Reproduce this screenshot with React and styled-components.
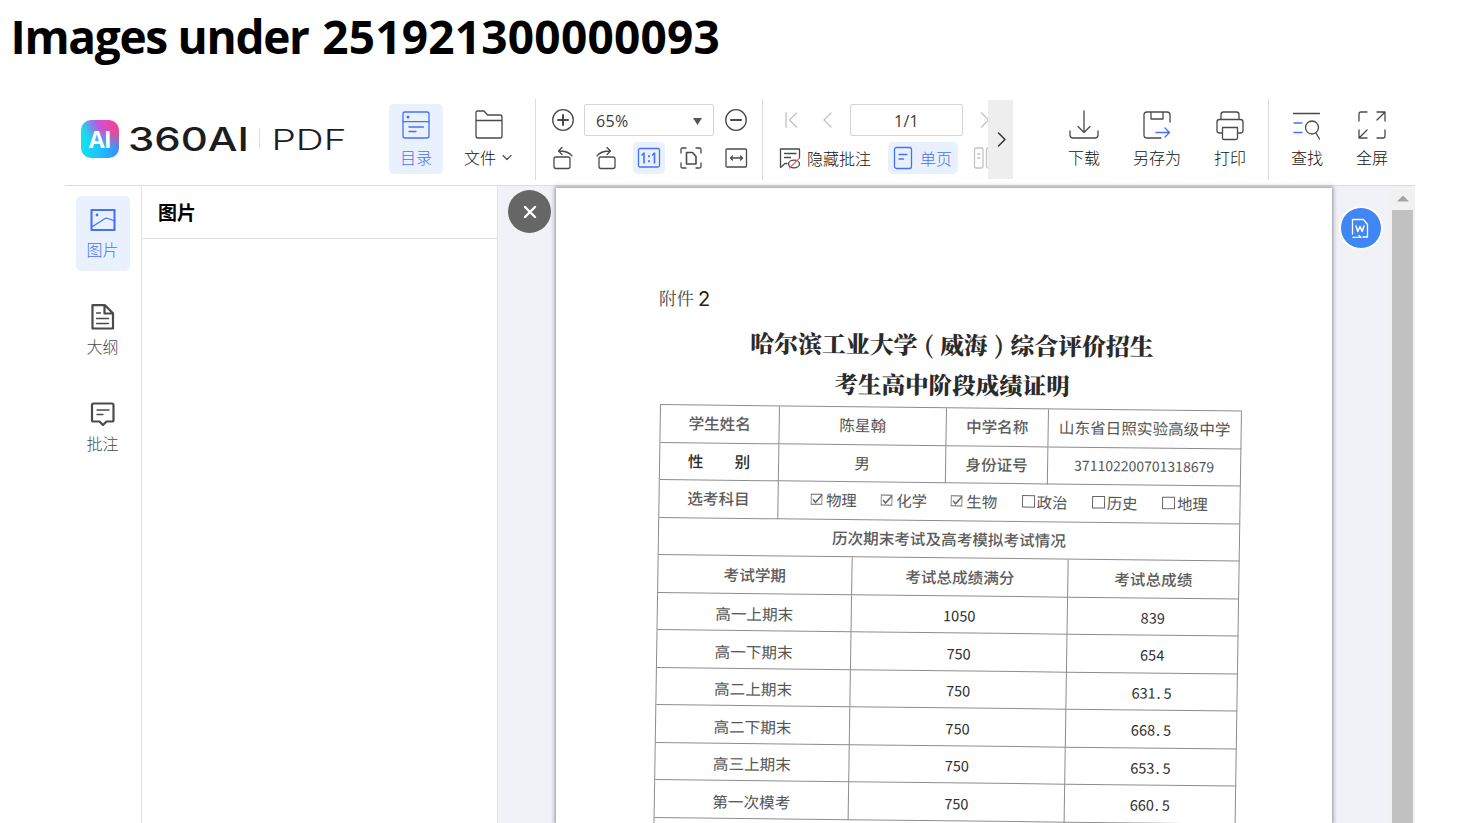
import React from 'react';
import styled, { createGlobalStyle, css } from 'styled-components';

const BLUE = '#4571f6';
const INK = '#4a4a4a';

const GlobalStyle = createGlobalStyle`
  * { box-sizing: border-box; }
  html, body { margin: 0; background: #fff; overflow: hidden; }
  body { font-family: "Open Sans", "Noto Sans CJK SC", sans-serif; color: #222; }
  svg { display: block; flex: none; }
`;

const Shell = styled.div`
  width: 1472px;
  height: 823px;
  overflow: hidden;
  display: flex;
  flex-direction: column;
`;

const Heading = styled.h1`
  margin: 0;
  height: 98px;
  padding: 6px 0 0 10.5px;
  font: 700 46px/60px "Open Sans", sans-serif;
  letter-spacing: 0.2px;
  color: #000;
  white-space: nowrap;
`;

const HeadingWords = styled.span`
  margin-right: 3px;
  letter-spacing: -1.3px;
`;

const Viewer = styled.div`
  width: 1350px;
  margin-left: 65px;
  flex: 1;
  min-height: 0;
  display: flex;
  flex-direction: column;
`;

const Toolbar = styled.header`
  height: 88px;
  flex: none;
  display: flex;
  align-items: flex-start;
  border-bottom: 1px solid #dedee1;
`;

const Brand = styled.div`
  width: 324px;
  height: 82px;
  padding-left: 16px;
  display: flex;
  align-items: center;
`;

const BrandBadge = styled.div`
  width: 38px;
  height: 38px;
  border-radius: 10px;
  display: flex;
  align-items: center;
  justify-content: center;
  font: 700 23px/38px "Open Sans", sans-serif;
  letter-spacing: -0.5px;
  color: #fff;
  background:
    radial-gradient(circle at 100% 22%, #ff3f83 0, rgba(255, 63, 131, 0) 45%),
    radial-gradient(circle at 65% 0, #e348da 0, rgba(200, 80, 225, 0.9) 22%, rgba(150, 90, 235, 0) 55%),
    linear-gradient(100deg, #14dff0 15%, #1fc0fa 55%, #3b8bff 100%);
`;

const Wordmark = styled.svg`
  margin-left: 9px;
  font-family: Inter, sans-serif;
`;

const Divider = styled.i`
  width: 1px;
  height: 81px;
  margin: 1px ${p => p.$right || 0}px 0 ${p => p.$left || 0}px;
  background: #dadadd;
`;

const Tool = styled.button`
  width: ${p => p.$width || 60}px;
  height: 70px;
  margin: 6px 0 0 ${p => p.$left || 0}px;
  padding: 5px 0 0;
  border: 0;
  border-radius: 5px;
  background: ${p => (p.$active ? '#eaf1fe' : 'transparent')};
  color: ${p => (p.$active ? BLUE : INK)};
  display: flex;
  flex-direction: column;
  align-items: center;
`;

const ToolLabel = styled.span`
  margin-top: 4px;
  display: flex;
  align-items: center;
  gap: 6px;
  font: 300 16px/24px "Noto Sans CJK SC", sans-serif;
  color: ${p => (p.$active ? BLUE : '#111')};
  white-space: nowrap;
`;

const ZoomGroup = styled.div`
  width: 205px;
  margin: 6px 0 0 11px;
`;

const ZoomRow = styled.div`
  height: 32px;
  margin-bottom: 6px;
  display: grid;
  grid-template-columns: 37px 136px 32px;
  align-items: center;
`;

const FitRow = styled.div`
  display: grid;
  grid-template-columns: 43px 42.5px 42.5px 44.5px 32px;
`;

const IconCell = styled.span`
  width: 32px;
  height: 32px;
  display: flex;
  align-items: center;
  justify-content: center;
  border-radius: 5px;
  color: ${p => (p.$active ? BLUE : INK)};
  background: ${p => (p.$active ? '#eaf1fe' : 'transparent')};
`;

const Field = styled.div`
  width: ${p => p.$width}px;
  height: 32px;
  padding: 2px 11px 0;
  border: 1px solid #d5d5d7;
  border-radius: 2px;
  display: flex;
  align-items: center;
  justify-content: ${p => (p.$center ? 'center' : 'space-between')};
  font: 400 16px/28px "Open Sans", sans-serif;
  letter-spacing: 0.3px;
  color: #3a3a3a;
`;

const PageGroup = styled.div`
  width: 225px;
  height: 76px;
  padding-top: 6px;
  overflow: hidden;
`;

const PageRow = styled.div`
  width: 260px;
  height: 32px;
  margin-bottom: 6px;
  display: flex;
  align-items: center;
`;

const Pager = styled.span`
  width: 22px;
  margin-left: ${p => p.$left}px;
  display: flex;
  justify-content: center;
  color: #c4c4c4;
`;

const TextTool = styled.span`
  height: 32px;
  margin-left: ${p => p.$left}px;
  padding: 0 ${p => (p.$active ? 6 : 0)}px 0 ${p => (p.$active ? 5 : 0)}px;
  border-radius: 5px;
  display: flex;
  align-items: center;
  gap: ${p => (p.$active ? 7 : 6)}px;
  font: 300 16px/31px "Noto Sans CJK SC", sans-serif;
  color: ${p => (p.$active ? BLUE : '#111')};
  background: ${p => (p.$active ? '#eaf1fe' : 'transparent')};
`;

const Expander = styled.div`
  width: 25px;
  height: 79px;
  margin-top: 2px;
  display: flex;
  align-items: center;
  justify-content: center;
  color: #333;
  background: #eeeeee;
`;

const Workspace = styled.div`
  flex: 1;
  min-height: 0;
  display: flex;
`;

const Sidebar = styled.nav`
  width: 77px;
  padding: 10px 0 0 11px;
  border-right: 1px solid #e2e2e4;
  display: flex;
  flex-direction: column;
  gap: 22px;
`;

const SideItem = styled.div`
  width: 54px;
  height: 75px;
  padding: 11px 1px 0 0;
  border-radius: 5px;
  display: flex;
  flex-direction: column;
  align-items: center;
  gap: 5px;
  font: 300 16px/22px "Noto Sans CJK SC", sans-serif;
  color: ${p => (p.$active ? BLUE : INK)};
  background: ${p => (p.$active ? '#eaf1fe' : 'transparent')};
`;

const Panel = styled.section`
  width: 356px;
  border-right: 1px solid #e2e2e4;
`;

const PanelTitle = styled.h2`
  margin: 0;
  height: 53px;
  padding-left: 16px;
  border-bottom: 1px solid #e2e2e4;
  font: 700 19px/52px "Noto Sans CJK SC", sans-serif;
  color: #000;
`;

const Canvas = styled.main`
  position: relative;
  flex: 1;
  padding: 2px 0 0 58px;
  display: flex;
  justify-content: space-between;
  background: #f0f2f7;
`;

const CloseButton = styled.button`
  position: absolute;
  left: 10px;
  top: 4px;
  width: 43px;
  height: 43px;
  padding: 0;
  border: 0;
  border-radius: 50%;
  background: #666;
  display: flex;
  align-items: center;
  justify-content: center;
`;

const WordButton = styled.button`
  position: absolute;
  left: 842px;
  top: 21px;
  width: 42px;
  height: 42px;
  padding: 0 2px 0 0;
  border: 1px solid #fff;
  border-radius: 50%;
  box-shadow: 0 0 1px 1px #fff;
  background: #4086f4;
  display: flex;
  align-items: center;
  justify-content: center;
`;

const Scrollbar = styled.div`
  width: 25px;
  margin-top: -2px;
  padding: 9px 2px 0;
  background: #f1f1f1;
  display: flex;
  flex-direction: column;
  align-items: center;
  gap: 8px;
`;

const Thumb = styled.div`
  width: 21px;
  flex: 1;
  background: #c1c1c1;
`;

const Paper = styled.article`
  width: 776px;
  padding-top: 98px;
  overflow: hidden;
  background: #fff;
  box-shadow: 0 0 4px 1px rgba(70, 70, 85, 0.6);
  font-family: "Noto Sans CJK SC", sans-serif;
`;

const Attachment = styled.div`
  margin-left: 103px;
  height: 24px;
  display: flex;
  gap: 4px;
  font-family: "Noto Serif CJK SC", "Noto Sans CJK SC", serif;
  font-size: 17.5px;
  font-weight: 400;
  line-height: 24px;
  color: #4a4a4a;
`;

const AttachmentNo = styled.span`
  font: 400 20px/26px Inter, sans-serif;
  color: #222;
`;

const TitleLine = styled.div`
  margin: ${p => p.$top}px 0 0 16px;
  height: ${p => p.$height}px;
  text-align: center;
  font-family: "Noto Serif CJK SC", "Noto Sans CJK SC", serif;
  font-size: ${p => p.$size}px;
  font-weight: 900;
  line-height: ${p => p.$height - 3}px;
  color: #2b2b2b;
  transform: rotate(0.5deg);
`;

const Bracket = styled.span`
  display: inline-block;
  width: 22.5px;
  text-align: center;
  font-weight: 700;
`;

const ScoreTable = styled.div`
  width: 582px;
  margin: 0 0 0 104px;
  border: solid #8c8c8c;
  border-width: 1px 0 0 1px;
  transform: matrix(1, 0.0113, -0.0155, 1, 0, 0);
  transform-origin: 0 0;
`;

const Row = styled.div`
  height: 37.5px;
  display: flex;
`;

const Cell = styled.div`
  width: ${p => p.$w}px;
  padding: ${p => p.$drop || 0}px 0 ${p => p.$lift || 0}px 0;
  border: solid #8c8c8c;
  border-width: 0 1px 1px 0;
  display: flex;
  align-items: center;
  justify-content: center;
  font-size: 15.6px;
  font-weight: 400;
  line-height: 22px;
  white-space: pre;
  color: #555;
  ${p => p.$label && css`
    font-weight: 500;
    color: #5c5c5c;
  `}
  ${p => p.$strong && css`
    font-weight: 500;
    color: #2c2c2c;
  `}
`;

const Digits = styled.span`
  font-size: ${p => p.$size || 14.5}px;
  color: ${p => p.$color || '#2e2e2e'};
  padding-top: 2px;
`;

const Point = styled.span`
  display: inline-block;
  width: 8px;
  padding-left: 1px;
`;

const Subjects = styled.div`
  width: 462px;
  padding: 0 0 3px 32px;
  border: solid #8c8c8c;
  border-width: 0 1px 1px 0;
  display: grid;
  grid-template-columns: repeat(6, 70.2px);
  align-items: center;
`;

const Subject = styled.span`
  display: flex;
  align-items: center;
  gap: ${p => (p.$on ? 3.5 : 1.5)}px;
  font-size: 15.4px;
  line-height: 22px;
  color: #555;
`;

const Line = ({ size = 30, w = 1.3, children, ...rest }) => (
  <svg width={size} height={size} viewBox={`0 0 ${size} ${size}`} fill="none" stroke="currentColor"
    strokeWidth={w} strokeLinecap="round" strokeLinejoin="round" {...rest}>{children}</svg>
);

const CatalogIcon = () => (
  <Line size={32}><rect x="3" y="3" width="26" height="26" rx="2" /><path d="M3 12.7h26M9 18h14.500M9 22.500h7" />
    <circle cx="8" cy="8" r="1.500" fill="currentColor" stroke="none" /></Line>
);
const FolderIcon = () => (
  <Line size={32}><path d="M4 11.500V3.500Q4 2 5.500 2H12l3.500 4H28q2 0 2 2v19q0 2-2 2H6q-2 0-2-2V11.500h26" /></Line>
);
const DownloadIcon = () => (
  <Line size={32}><path d="M16 2v21M10 17.500l6 6 6-6M2 22v4q0 3 3 3h22q3 0 3-3v-4" /></Line>
);
const SaveAsIcon = () => (
  <Line size={32}><path d="M20 29H6q-3 0-3-3V6q0-3 3-3h20q3 0 3 3v7M10 3v7h12V3" />
    <path d="M15 23.500h13.500M24 19l4.500 4.500L24 28" stroke={BLUE} /></Line>
);
const PrintIcon = () => (
  <Line size={32}><path d="M7 10.500V5.500Q7 3 9.500 3h13Q25 3 25 5.500v5M8 24H5.500Q3 24 3 21.500v-8.500q0-2.500 2.500-2.500h21q2.500 0 2.500 2.500v8.500q0 2.500-2.500 2.500H24" />
    <path d="M8.500 18.500h15V29q0 1.500-1.500 1.500H10q-1.500 0-1.500-1.500z" /></Line>
);
const FindIcon = () => (
  <Line size={32}><path d="M2.500 4.500h26" /><circle cx="21" cy="18.500" r="6.500" /><path d="M25 24l3.500 6" />
    <path d="M3 14h8M3 23.500h8" stroke={BLUE} /></Line>
);
const FullIcon = () => (
  <Line size={32}><path d="M3 12V5q0-2 2-2h6M21 3h8v9M29 3l-8 8M29 21v6q0 2-2 2h-6M3 21v8h8M3 29l8-8" /></Line>
);
const Chevron = () => <Line size={10} w={1.2} color={INK}><path d="M1 3.500l4 4 4-4" /></Line>;
const Plus = () => (
  <Line size={24}><circle cx="12" cy="12" r="10.300" /><path d="M7 12h10M12 7v10" strokeWidth="2" /></Line>
);
const Minus = () => (
  <Line size={24}><circle cx="12" cy="12" r="10.300" /><path d="M7 12h10" strokeWidth="2" /></Line>
);
const RotateLeft = () => (
  <Line size={24}><rect x="3" y="11" width="16" height="11.500" rx="2" /><path d="M21 10q-3-5-13.500-5M11 1.500L7.500 5 11 8.500" /></Line>
);
const RotateRight = () => (
  <Line size={24}><rect x="5" y="11" width="16" height="11.500" rx="2" /><path d="M3 10q3-5 13.500-5M13 1.500L16.500 5 13 8.500" /></Line>
);
const ActualSize = () => (
  <Line size={24}><rect x="1.500" y="2.500" width="21" height="18.500" rx="1.500" />
    <path d="M5 9l2-2v10M15.500 9l2-2v10" strokeWidth="1.600" /><path d="M12 10v.4M12 15v.4" strokeWidth="1.900" /></Line>
);
const FitPage = () => (
  <Line size={24}><path d="M2 7V3.500Q2 2 3.500 2H7M17 2h3.500Q22 2 22 3.500V7M22 17v3.500q0 1.500-1.500 1.500H17M7 22H3.500Q2 22 2 20.500V17" />
    <path d="M7.500 6.500h6l3.500 4v7.500h-9.500z" strokeWidth="1.600" /></Line>
);
const FitWidth = () => (
  <Line size={24}><rect x="2" y="3" width="20.500" height="18" rx="1" /><path d="M6.500 12h12M8.500 10l-2 2 2 2M16.500 10l2 2-2 2" /></Line>
);
const HideNotes = () => (
  <Line size={22} w={1.3} color={INK}><path d="M8 16.500H6L1.500 20.500V2h19v9M5.500 6.500h11.500M5.500 10.500h6" />
    <ellipse cx="15" cy="17" rx="5.500" ry="3.800" /><path d="M10.500 21l9-9" stroke="#f16474" /></Line>
);
const SinglePage = () => (
  <Line size={24} width={20} viewBox="0 0 20 24"><rect x="1.500" y="1.500" width="17" height="21" rx="2" /><path d="M6 8.500h8M6 13h4.500" /></Line>
);
const DoublePage = () => (
  <Line size={24}><rect x="1.500" y="2" width="8.500" height="20" rx="1.500" /><rect x="13.500" y="2" width="8.500" height="20" rx="1.500" /><path d="M4.500 8h2.500M4.500 12h2.500" /></Line>
);

const PictureIcon = () => (
  <Line size={26} w={2.1}><rect x="1.500" y="3" width="23" height="20" /><path d="M2.500 19.500L13.500 12.500q2-2 4.500-1l5.500 2" strokeWidth="1.300" />
    <circle cx="7" cy="8" r="1.400" fill="currentColor" stroke="none" /></Line>
);
const OutlineIcon = () => (
  <Line size={26} w={2.2}><path d="M2.500 1.200H15l8 8v15.300H2.500zM14.500 1.500v8h8" /><path d="M6.500 9h4M6.500 14.500h12M6.500 19.500h12" strokeWidth="1.300" /></Line>
);
const CommentIcon = () => (
  <Line size={26} w={2.2}><path d="M3.500 2.500H22q1.500 0 1.500 1.500v15q0 1.500-1.500 1.500h-5.500L13 24l-3.500-3.500h-6Q2 20.500 2 19V4Q2 2.500 3.500 2.500z" />
    <path d="M7 9h12M7 13.500h6" strokeWidth="1.300" /></Line>
);
const Box = ({ on }) => (
  <svg width={on ? 12 : 14} height="14" fill="none" stroke="#666" strokeWidth="1">
    {on ? <><path d="M.5 2.500h11v10H.5z" /><path d="M2.500 7.500L5 10.500 11.500 3" strokeWidth="1.500" /></> : <path d="M1 1.500h12v11.500H1z" />}
  </svg>
);

const subjects = [['物理', true], ['化学', true], ['生物', true], ['政治', false], ['历史', false], ['地理', false]];
const scores = [
  ['高一上期末', '1050', '839'],
  ['高一下期末', '750', '654'],
  ['高二上期末', '750', '631.5'],
  ['高二下期末', '750', '668.5'],
  ['高三上期末', '750', '653.5'],
  ['第一次模考', '750', '660.5'],
];

const Score = ({ value }) => {
  const [whole, part] = value.split('.');
  return <Digits>{whole}{part && <><Point>.</Point>{part}</>}</Digits>;
};

export default function App() {
  return (
    <Shell>
      <GlobalStyle />
      <Heading><HeadingWords>Images under </HeadingWords>251921300000093</Heading>
      <Viewer>
        <Toolbar>
          <Brand>
            <BrandBadge>AI</BrandBadge>
            <Wordmark width="220" height="38" fill="#1d1d1f">
              <text x="0" y="30.500" fontSize="32" fontWeight="500" textLength="121" lengthAdjust="spacingAndGlyphs">360AI</text>
              <path d="M131.500 9v19" stroke="#dddddf" />
              <text x="143.500" y="29.800" fontSize="28.500" fontWeight="300" textLength="75" lengthAdjust="spacingAndGlyphs">PDF</text>
            </Wordmark>
          </Brand>
          <Tool $active $width={54}><CatalogIcon /><ToolLabel $active>目录</ToolLabel></Tool>
          <Tool $left={15}><FolderIcon /><ToolLabel>文件<Chevron /></ToolLabel></Tool>
          <Divider $left={17} />
          <ZoomGroup>
            <ZoomRow>
              <IconCell><Plus /></IconCell>
              <Field $width={130}>65%<svg width="9" height="7"><path d="M0 0h9L4.500 7z" fill="#555" /></svg></Field>
              <IconCell><Minus /></IconCell>
            </ZoomRow>
            <FitRow>
              <IconCell><RotateLeft /></IconCell>
              <IconCell><RotateRight /></IconCell>
              <IconCell $active><ActualSize /></IconCell>
              <IconCell><FitPage /></IconCell>
              <IconCell><FitWidth /></IconCell>
            </FitRow>
          </ZoomGroup>
          <Divider $left={10} />
          <PageGroup>
            <PageRow>
              <Pager $left={17}><Line size={18}><path d="M4 1.500v15M14.500 2L7.500 9l7 7" /></Line></Pager>
              <Pager $left={15}><Line size={18}><path d="M12 2L5 9l7 7" /></Line></Pager>
              <Pager $left={-11} />
              <Field $width={113} $center>1/1</Field>
              <Pager $left={10}><Line size={18}><path d="M6.500 2l7 7-7 7" /></Line></Pager>
            </PageRow>
            <PageRow>
              <TextTool $left={16}><HideNotes />隐藏批注</TextTool>
              <TextTool $left={17} $active><SinglePage />单页</TextTool>
              <Pager $left={16}><DoublePage /></Pager>
            </PageRow>
          </PageGroup>
          <Expander><Line size={16} w={1.5}><path d="M5.500 1l6.500 6.500L5.500 14" /></Line></Expander>
          <Tool $left={41}><DownloadIcon /><ToolLabel>下载</ToolLabel></Tool>
          <Tool $left={13}><SaveAsIcon /><ToolLabel>另存为</ToolLabel></Tool>
          <Tool $left={13}><PrintIcon /><ToolLabel>打印</ToolLabel></Tool>
          <Divider $left={8} />
          <Tool $left={8}><FindIcon /><ToolLabel>查找</ToolLabel></Tool>
          <Tool $left={5}><FullIcon /><ToolLabel>全屏</ToolLabel></Tool>
        </Toolbar>
        <Workspace>
          <Sidebar>
            <SideItem $active><PictureIcon />图片</SideItem>
            <SideItem><OutlineIcon />大纲</SideItem>
            <SideItem><CommentIcon />批注</SideItem>
          </Sidebar>
          <Panel><PanelTitle>图片</PanelTitle></Panel>
          <Canvas>
            <Paper>
              <Attachment>附件<AttachmentNo>2</AttachmentNo></Attachment>
              <TitleLine $top={14} $height={42} $size={23.9}>哈尔滨工业大学<Bracket>(</Bracket>威海<Bracket>)</Bracket>综合评价招生</TitleLine>
              <TitleLine $top={2} $height={36} $size={23.5}>考生高中阶段成绩证明</TitleLine>
              <ScoreTable>
                <Row>
                  <Cell $w={119} $label $lift={3}>学生姓名</Cell><Cell $w={167} $lift={2}>陈星翰</Cell>
                  <Cell $w={102} $label $lift={2}>中学名称</Cell><Cell $w={193} $lift={2}>山东省日照实验高级中学</Cell>
                </Row>
                <Row>
                  <Cell $w={119} $strong $lift={2}>性　　别</Cell><Cell $w={167} $lift={2}>男</Cell>
                  <Cell $w={102} $label $lift={2}>身份证号</Cell>
                  <Cell $w={193} $lift={4}><Digits $size={14} $color="#555">371102200701318679</Digits></Cell>
                </Row>
                <Row>
                  <Cell $w={119} $label $lift={2}>选考科目</Cell>
                  <Subjects>
                    {subjects.map(([name, on]) => <Subject key={name} $on={on}><Box on={on} />{name}</Subject>)}
                  </Subjects>
                </Row>
                <Row><Cell $w={581} $label $lift={1}>历次期末考试及高考模拟考试情况</Cell></Row>
                <Row>
                  <Cell $w={194} $label $lift={1}>考试学期</Cell><Cell $w={216} $label $lift={1}>考试总成绩满分</Cell>
                  <Cell $w={171} $label $lift={1}>考试总成绩</Cell>
                </Row>
                {scores.map(([term, full, got]) => (
                  <Row key={term}>
                    <Cell $w={194} $drop={3}>{term}</Cell>
                    <Cell $w={216} $drop={1}><Score value={full} /></Cell>
                    <Cell $w={171}><Score value={got} /></Cell>
                  </Row>
                ))}
                <Row><Cell $w={581} /></Row>
              </ScoreTable>
            </Paper>
            <Scrollbar>
              <svg width="12" height="7"><path d="M0 6.500L6 .5l6 6z" fill="#a3a3a3" /></svg>
              <Thumb />
            </Scrollbar>
            <CloseButton><Line size={16} w={2.4} color="#fff"><path d="M3 3l10 10M13 3L3 13" /></Line></CloseButton>
            <WordButton>
              <Line size={20} color="#fff">
                <path d="M2.500 16V1.500h11l4 5V19H13M3 19.500h8l-2-2" />
                <path d="M6 8l1.800 5.500L10 8.500l2.200 5L14 8" strokeWidth="1.500" />
              </Line>
            </WordButton>
          </Canvas>
        </Workspace>
      </Viewer>
    </Shell>
  );
}
